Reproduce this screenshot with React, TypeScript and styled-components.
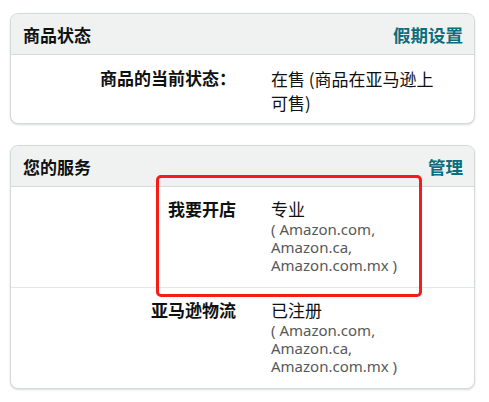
import React from 'react';
import styled, { createGlobalStyle } from 'styled-components';

const GlobalStyle = createGlobalStyle`
  html, body {
    margin: 0;
    padding: 0;
    background: #ffffff;
  }
  body {
    font-family: 'Noto Sans', 'Noto Sans CJK SC', sans-serif;
    color: #0f1111;
  }
`;

interface Marketplace {
  name: string;
}

interface ServiceRow {
  label: string;
  value: string;
  markets: Marketplace[];
}

const markets: Marketplace[] = [
  { name: 'Amazon.com' },
  { name: 'Amazon.ca' },
  { name: 'Amazon.com.mx' },
];

const services: ServiceRow[] = [
  { label: '我要开店', value: '专业', markets },
  { label: '亚马逊物流', value: '已注册', markets },
];

const App: React.FC = () => {
  const marketText = `( ${markets.map(m => m.name).join(', ')} )`;

  return (
    <Page>
      <GlobalStyle />
      <Card>
        <CardHeader>
          <Title>商品状态</Title>
          <HeaderLink href="#">假期设置</HeaderLink>
        </CardHeader>
        <StatusRow>
          <Label>商品的当前状态：</Label>
          <StatusValue>在售 (商品在亚马逊上可售)</StatusValue>
        </StatusRow>
      </Card>

      <Card>
        <CardHeader>
          <Title>您的服务</Title>
          <HeaderLink href="#">管理</HeaderLink>
        </CardHeader>
        {services.map((s, i) => (
          <ServiceItem key={s.label} $divider={i > 0}>
            <Label>{s.label}</Label>
            <ValueCol>
              <Value>{s.value}</Value>
              <Markets>{marketText}</Markets>
            </ValueCol>
          </ServiceItem>
        ))}
      </Card>

      <Highlight />
    </Page>
  );
};

export default App;

const Page = styled.div`
  position: relative;
  width: 489px;
  height: 402px;
  padding: 13px 0 0 10px;
  box-sizing: border-box;
  display: flex;
  flex-direction: column;
  gap: 21px;
`;

const Card = styled.section`
  width: 465px;
  box-sizing: border-box;
  border: 1px solid #d5d9d9;
  border-radius: 8px;
  box-shadow: 0 1px 2px rgba(15, 17, 17, 0.15);
  overflow: hidden;
  background: #ffffff;
`;

const CardHeader = styled.header`
  height: 41px;
  box-sizing: border-box;
  display: flex;
  align-items: center;
  justify-content: space-between;
  padding: 0 11px 0 12px;
  background: #f0f2f2;
  border-bottom: 1px solid #d5d9d9;
`;

const Title = styled.h2`
  margin: 0;
  font-family: 'Noto Sans CJK SC', sans-serif;
  font-size: 17px;
  font-weight: 700;
  color: #0f1111;
`;

const HeaderLink = styled.a`
  font-family: 'Noto Sans CJK SC', sans-serif;
  font-size: 17.5px;
  font-weight: 700;
  color: #0a6e7c;
  text-decoration: none;
`;

const Row = styled.div`
  display: grid;
  grid-template-columns: 225px 174px;
  column-gap: 35px;
`;

const StatusRow = styled(Row)`
  padding: 12px 0 8px;
`;

const ServiceItem = styled(Row)<{ $divider: boolean }>`
  padding: 11px 0 13px;
  border-top: ${p => (p.$divider ? '1px solid #e3e6e6' : 'none')};
`;

const Label = styled.div`
  text-align: right;
  font-family: 'Noto Sans CJK SC', sans-serif;
  font-size: 17px;
  font-weight: 700;
  line-height: 22px;
  color: #0f1111;
`;

const StatusValue = styled.div`
  font-family: 'Noto Sans CJK SC', sans-serif;
  font-size: 17px;
  line-height: 24px;
  color: #0f1111;
`;

const ValueCol = styled.div`
  display: flex;
  flex-direction: column;
`;

const Value = styled.div`
  font-family: 'Noto Sans CJK SC', sans-serif;
  font-size: 17px;
  line-height: 22px;
  color: #0f1111;
`;

const Markets = styled.div`
  font-family: 'Noto Sans', 'Noto Sans CJK SC', sans-serif;
  font-size: 15px;
  line-height: 18px;
  color: #565959;
`;

const Highlight = styled.div`
  position: absolute;
  left: 156px;
  top: 175px;
  width: 266px;
  height: 122px;
  box-sizing: border-box;
  border: 3px solid #f61c17;
  border-radius: 5px;
  pointer-events: none;
`;
